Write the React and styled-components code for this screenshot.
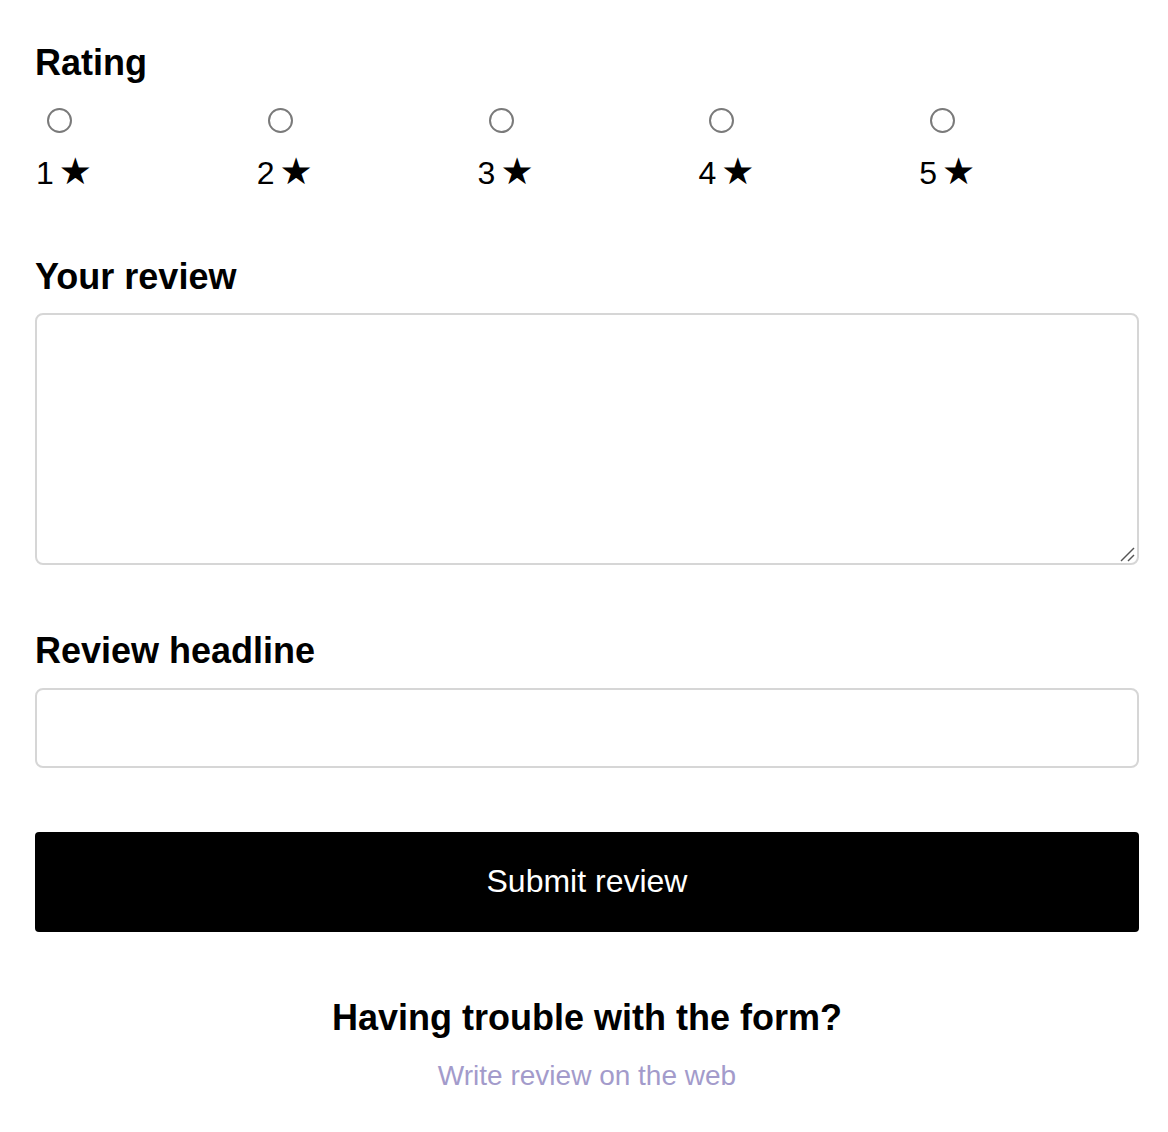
import React from 'react';
import styled, { createGlobalStyle } from 'styled-components';

const GlobalStyle = createGlobalStyle`
  body {
    margin: 0;
    background: #ffffff;
    font-family: "Liberation Sans", Arial, Helvetica, sans-serif;
    color: #000000;
  }
`;

const ratings = [1, 2, 3, 4, 5];

const App = () => {
  return (
    <>
      <GlobalStyle />
      <Wrapper>
        <Section>
          <Heading>Rating</Heading>
          <RatingRow>
            {ratings.map((n) => (
              <RatingOption key={n}>
                <Radio type="radio" name="rating" id={`rating-${n}`} value={n} />
                <RatingLabel htmlFor={`rating-${n}`}>
                  {n}<Star>★</Star>
                </RatingLabel>
              </RatingOption>
            ))}
          </RatingRow>
        </Section>

        <Section $gap={15}>
          <Heading>Your review</Heading>
          <AreaWrap>
            <TextArea name="review" />
            <Grip width="16" height="16" viewBox="0 0 16 16">
              <line x1="1" y1="15" x2="14" y2="2" stroke="#555" strokeWidth="1.5" />
              <line x1="8" y1="15" x2="14" y2="9" stroke="#555" strokeWidth="1.5" />
            </Grip>
          </AreaWrap>
        </Section>

        <Section $gap={15}>
          <Heading>Review headline</Heading>
          <TextInput type="text" name="headline" />
        </Section>

        <SubmitButton type="submit">Submit review</SubmitButton>

        <Help>
          <Heading>Having trouble with the form?</Heading>
          <WebLink href="#">Write review on the web</WebLink>
        </Help>
      </Wrapper>
    </>
  );
};

const Wrapper = styled.form`
  display: flex;
  flex-direction: column;
  gap: 64px;
  padding: 41px 29px 40px 35px;
`;

const Section = styled.div`
  display: flex;
  flex-direction: column;
  gap: ${(p) => p.$gap || 0}px;
`;

const Heading = styled.h2`
  margin: 0;
  font-size: 36px;
  line-height: 1.2;
  font-weight: 700;
`;

const RatingRow = styled.div`
  display: grid;
  grid-template-columns: repeat(5, 1fr);
  margin-top: 24px;
`;

const RatingOption = styled.div`
  display: flex;
  flex-direction: column;
  align-items: flex-start;
  gap: 20px;
`;

const Radio = styled.input`
  appearance: none;
  width: 25px;
  height: 25px;
  margin: 0 0 0 12px;
  border: 2px solid #7a7a7a;
  border-radius: 50%;
  background: #fff;
  box-sizing: border-box;
  cursor: pointer;

  &:checked {
    border-color: #000;
    box-shadow: inset 0 0 0 5px #fff;
    background: #000;
  }
`;

const RatingLabel = styled.label`
  display: flex;
  align-items: baseline;
  height: 38px;
  font-size: 32px;
  line-height: 38px;
  padding-left: 1px;
`;

const Star = styled.span`
  font-family: "DejaVu Sans", sans-serif;
  font-size: 37px;
  line-height: 38px;
  margin-left: 5px;
`;

const AreaWrap = styled.div`
  position: relative;
  display: flex;
`;

const TextArea = styled.textarea`
  width: 100%;
  height: 252px;
  box-sizing: border-box;
  border: 2px solid #d6d6d6;
  border-radius: 8px;
  padding: 12px 16px;
  font-family: inherit;
  font-size: 32px;
  resize: none;
  outline: none;
`;

const Grip = styled.svg`
  position: absolute;
  right: 3px;
  bottom: 3px;
  pointer-events: none;
`;

const TextInput = styled.input`
  width: 100%;
  height: 80px;
  box-sizing: border-box;
  border: 2px solid #d6d6d6;
  border-radius: 8px;
  padding: 0 16px;
  font-family: inherit;
  font-size: 32px;
  outline: none;
`;

const SubmitButton = styled.button`
  height: 100px;
  width: 100%;
  border: none;
  border-radius: 4px;
  background: #000;
  color: #fff;
  font-family: inherit;
  font-size: 32px;
  cursor: pointer;
`;

const Help = styled.div`
  display: flex;
  flex-direction: column;
  align-items: center;
  gap: 20px;
  text-align: center;
`;

const WebLink = styled.a`
  font-size: 28px;
  line-height: 1.2;
  color: #a39bcb;
  text-decoration: none;
`;

export default App;
